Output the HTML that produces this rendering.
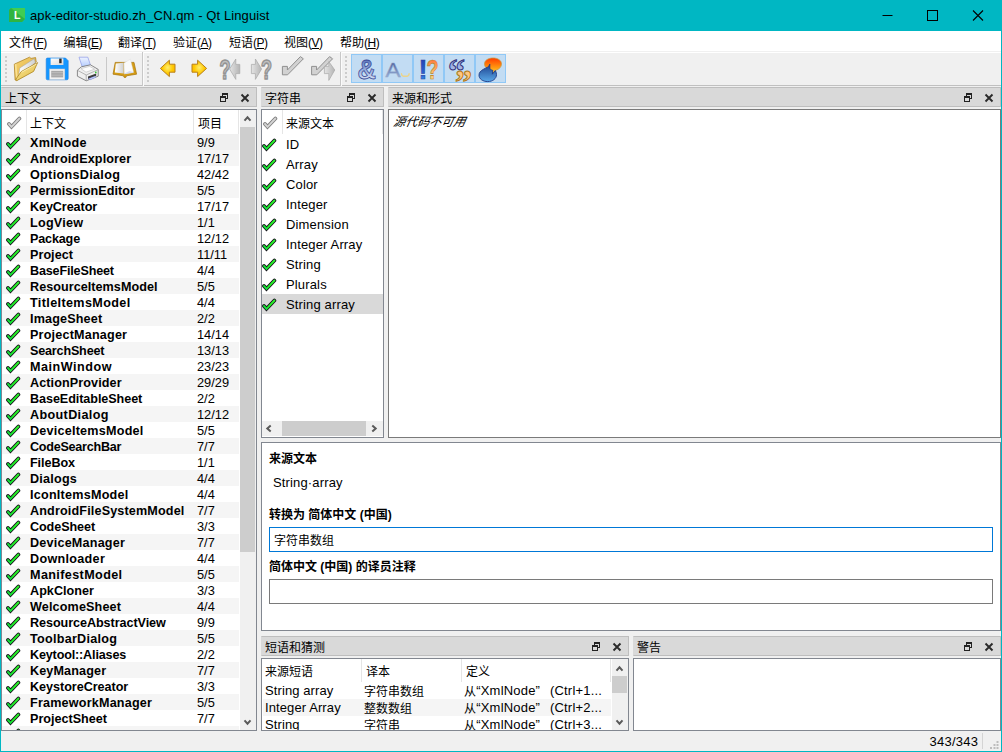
<!DOCTYPE html>
<html lang="zh-CN">
<head>
<meta charset="utf-8">
<title>apk-editor-studio.zh_CN.qm - Qt Linguist</title>
<style>
*{box-sizing:border-box;margin:0;padding:0}
html,body{width:1002px;height:752px;overflow:hidden;background:#f0f0f0}
body{font-family:"Liberation Sans","Noto Sans CJK SC",sans-serif;font-size:12px;color:#000;position:relative}
.abs{position:absolute}
svg{display:block}
#win{position:absolute;left:0;top:0;width:1002px;height:752px;background:#f0f0f0;border:1px solid #00b7c3;border-top:0}
#title{position:absolute;left:0;top:0;width:1002px;height:31px;background:#00b7c3}
#title .txt{position:absolute;left:30px;top:8px;font-size:13px;line-height:16px;white-space:nowrap;letter-spacing:.1px}
#menu{position:absolute;left:1px;top:31px;width:1000px;height:20px;background:#fff}
#menu span{position:absolute;top:4px;line-height:16px;white-space:nowrap}
#menu em{font-style:normal;letter-spacing:-.5px}
#tb{position:absolute;left:1px;top:52px;width:1000px;height:34px;background:#f0f0f0;border-top:1px solid #fff;border-bottom:1px solid #c0c0c0}
.dt{position:absolute;height:20px;background:#d9d9d9;border:1px solid #bebebe;border-left-color:#d9d9d9;line-height:22px;padding-left:3px;white-space:nowrap;overflow:hidden}
.dt .ic{position:absolute}
.view{position:absolute;background:#fff;border:1px solid #828790;overflow:hidden}
.row{position:absolute;left:0;height:16px;line-height:16px;white-space:nowrap}
.row.alt{background:#f5f5f5}
.row.sel{background:#f0f0f0}
.row b{position:absolute;left:28px;top:1px;font-weight:bold;font-size:12.6px}
.row i{position:absolute;left:195px;top:1px;font-style:normal;font-size:12.8px}
.row svg{position:absolute;left:4px;top:0}
.sb{position:absolute;background:#f0f0f0}
.th{position:absolute;background:#cdcdcd}
.hd{position:absolute;background:#fff;white-space:nowrap}
.vl{position:absolute;width:1px;background:#e5e5e5}
.mrow{position:absolute;left:0;width:121px;height:20px;line-height:20px;white-space:nowrap}
.mrow span{position:absolute;left:24px;top:1px;font-size:13px;letter-spacing:.15px}
.mrow svg{position:absolute;left:0px;top:2px}
.lbl{position:absolute;font-weight:bold;white-space:nowrap;line-height:16px}
.fld{position:absolute;background:#fff;border:1px solid #7a7a7a;line-height:27px;padding-left:4px;overflow:hidden}
.pr{position:absolute;left:1px;width:348px;height:17px;line-height:17px;white-space:nowrap}
.pr>span{position:absolute;top:0}
.l13{font-size:13px;letter-spacing:.1px}
.c12{font-size:12px;position:relative;top:1px}
</style>
</head>
<body>

<svg width="0" height="0" style="position:absolute"><defs>
<linearGradient id="gg" x1="0" y1="1" x2="1" y2="0"><stop offset="0" stop-color="#10d840"/><stop offset=".5" stop-color="#22f022"/><stop offset="1" stop-color="#2cf02c"/></linearGradient>
<symbol id="ck" viewBox="0 0 16 16"><polyline points="2,10 4.5,12.8 12.4,4.5" fill="none" stroke="#14101a" stroke-width="3.7" stroke-linecap="round" stroke-linejoin="miter"/><polyline points="2,10 4.5,12.8 12.4,4.5" fill="none" stroke="url(#gg)" stroke-width="1.9" stroke-linecap="round" stroke-linejoin="miter"/></symbol>
<symbol id="ckg" viewBox="0 0 16 16"><polyline points="2,10 4.5,12.8 12.4,4.5" fill="none" stroke="#7e7e7e" stroke-width="3.7" stroke-linecap="round" stroke-linejoin="miter"/><polyline points="2,10 4.5,12.8 12.4,4.5" fill="none" stroke="#d4d4d4" stroke-width="1.9" stroke-linecap="round" stroke-linejoin="miter"/></symbol>
<symbol id="fl" viewBox="0 0 10 10"><rect x="3.5" y="1.5" width="5" height="5" fill="none" stroke="#222" stroke-width="1"/><rect x="3" y="1" width="6" height="2" fill="#222"/><rect x="1.5" y="4.5" width="5" height="5" fill="#d9d9d9" stroke="#222" stroke-width="1"/><rect x="1" y="4" width="6" height="2" fill="#222"/></symbol>
<symbol id="cl" viewBox="0 0 10 10"><path d="M1.500 1.500l7 7M8.500 1.500l-7 7" stroke="#2a2a2a" stroke-width="1.9" fill="none"/></symbol>
<symbol id="up" viewBox="0 0 10 10"><path d="M1.5 7.7L4.5 4.3 7.5 7.7" stroke="#5a5a5a" stroke-width="2" fill="none"/></symbol>
<symbol id="dn" viewBox="0 0 10 10"><path d="M1.5 2.3L4.5 5.7 7.5 2.3" stroke="#5a5a5a" stroke-width="2" fill="none"/></symbol>
<symbol id="lf" viewBox="0 0 10 10"><path d="M7.700 1.5L4.300 4.500 7.700 7.500" stroke="#5a5a5a" stroke-width="2" fill="none"/></symbol>
<symbol id="rt" viewBox="0 0 10 10"><path d="M2.300 1.5L5.700 4.500 2.300 7.500" stroke="#5a5a5a" stroke-width="2" fill="none"/></symbol>
</defs></svg>
<div id="win"></div>
<div id="title"><svg class="abs" style="left:9px;top:8px" width="16" height="14" viewBox="0 0 16 14"><path d="M2 0h14v11l-3 3H0V2z" fill="#41cd52"/><path d="M0 2l2-2 14 11-3 3H0z" fill="#2aab3c" opacity=".75"/><text x="5" y="11" font-family="Liberation Sans,sans-serif" font-size="10.5" font-weight="bold" fill="#fff">L</text></svg><span class="txt">apk-editor-studio.zh_CN.qm - Qt Linguist</span>
<svg class="abs" style="left:864px;top:0" width="138" height="31" viewBox="0 0 138 31"><path d="M18.5 15.5h10" stroke="#000" stroke-width="1"/><rect x="63.5" y="10.5" width="10" height="10" fill="none" stroke="#000" stroke-width="1"/><path d="M109 10.5l10 10M119 10.5l-10 10" stroke="#000" stroke-width="1.1"/></svg>
</div>
<div id="menu">
<span style="left:8px">文件<em>(<u>F</u>)</em></span>
<span style="left:62.5px">编辑<em>(<u>E</u>)</em></span>
<span style="left:117px">翻译<em>(<u>T</u>)</em></span>
<span style="left:172px">验证<em>(<u>A</u>)</em></span>
<span style="left:228px">短语<em>(<u>P</u>)</em></span>
<span style="left:283px">视图<em>(<u>V</u>)</em></span>
<span style="left:339px">帮助<em>(<u>H</u>)</em></span>
</div>
<div id="tb"><svg class="abs" style="left:-1px;top:-2px" width="1002" height="36" viewBox="0 51 1002 36">
<defs>
<linearGradient id="fo1" x1="0" y1="0" x2="1" y2="1"><stop offset="0" stop-color="#f8d674"/><stop offset="1" stop-color="#dca838"/></linearGradient>
<linearGradient id="fo2" x1="0" y1="0" x2="1" y2="1"><stop offset="0" stop-color="#f9e796"/><stop offset="1" stop-color="#e2bc48"/></linearGradient>
<linearGradient id="pg" x1="0" y1="0" x2="1" y2="0"><stop offset="0" stop-color="#fff"/><stop offset="1" stop-color="#d0d0d0"/></linearGradient>
<linearGradient id="sv1" x1="0" y1="0" x2="1" y2="1"><stop offset="0" stop-color="#fff"/><stop offset="1" stop-color="#d8d8d8"/></linearGradient>
<linearGradient id="pp" x1="0" y1="0" x2="0" y2="1"><stop offset="0" stop-color="#eef3ff"/><stop offset="1" stop-color="#b4ccff"/></linearGradient>
<radialGradient id="ar" cx=".5" cy=".45" r=".6"><stop offset="0" stop-color="#ffee70"/><stop offset=".6" stop-color="#ffc800"/><stop offset="1" stop-color="#ffb400"/></radialGradient>
<linearGradient id="gr" x1="0" y1="0" x2="1" y2="0"><stop offset="0" stop-color="#e4e4e4"/><stop offset="1" stop-color="#b4b4b4"/></linearGradient>
<linearGradient id="amp" x1="0" y1="0" x2="0" y2="1"><stop offset="0" stop-color="#3a55a8"/><stop offset=".55" stop-color="#9db4e0"/><stop offset="1" stop-color="#ffffff"/></linearGradient>
<linearGradient id="aa" x1="0" y1="0" x2="0" y2="1"><stop offset="0" stop-color="#3c4a8c"/><stop offset="1" stop-color="#a9c4e6"/></linearGradient>
<linearGradient id="ex" x1="0" y1="0" x2="0" y2="1"><stop offset="0" stop-color="#2438a8"/><stop offset=".7" stop-color="#2a6ad8"/><stop offset="1" stop-color="#40c8ff"/></linearGradient>
<linearGradient id="qm" x1="0" y1="0" x2="0" y2="1"><stop offset="0" stop-color="#ff5a2a"/><stop offset=".6" stop-color="#ffc070"/><stop offset="1" stop-color="#fff0a0"/></linearGradient>
<linearGradient id="q6" x1="0" y1="0" x2="0" y2="1"><stop offset="0" stop-color="#7088d0"/><stop offset="1" stop-color="#eaf2ff"/></linearGradient>
<linearGradient id="q9" x1="0" y1="0" x2="0" y2="1"><stop offset="0" stop-color="#ffb868"/><stop offset="1" stop-color="#ffe8b8"/></linearGradient>
<linearGradient id="bo" x1="0" y1="0" x2="0" y2="1"><stop offset="0" stop-color="#ff3c00"/><stop offset=".6" stop-color="#ff9a10"/><stop offset="1" stop-color="#ffe040"/></linearGradient>
<linearGradient id="bb" x1="0" y1="0" x2="0" y2="1"><stop offset="0" stop-color="#1c3f8c"/><stop offset="1" stop-color="#58a8e8"/></linearGradient>
<g id="hdl" fill="#cccccc"><rect x="0" y="56" width="2" height="2"/><rect x="0" y="60" width="2" height="2"/><rect x="0" y="64" width="2" height="2"/><rect x="0" y="68" width="2" height="2"/><rect x="0" y="72" width="2" height="2"/><rect x="0" y="76" width="2" height="2"/><rect x="0" y="80" width="2" height="2"/></g>
</defs>
<use href="#hdl" x="5"/><use href="#hdl" x="147"/><use href="#hdl" x="345"/>
<path d="M142.5 52v34M340.5 52v34" stroke="#c8c8c8" stroke-width="1"/>
<path d="M143.5 52v34M341.5 52v34" stroke="#fbfbfb" stroke-width="1"/>
<path d="M106.5 57v24" stroke="#c9c9c9" stroke-width="1"/>
<!-- folder -->
<path d="M14.300 64.200L29.500 57.200l1.500 1.200 4.600-.8.600 4.400-19.500 18.600-1.600-.6z" fill="url(#fo1)" stroke="#b08424" stroke-width=".8" stroke-linejoin="round"/>
<path d="M14.700 64.600l1.700-.8 1.300 15-1.500.9z" fill="#fbe7a0" opacity=".8"/>
<path d="M19.800 68L34.200 58.800l1.200 3.600L18.300 77.800z" fill="url(#pg)" stroke="#a0a0a0" stroke-width=".5"/>
<path d="M21.200 71.600L37.600 62.600 33.600 71.400 17.200 80.400 15.600 79.600z" fill="url(#fo2)" stroke="#ac8420" stroke-width=".8" stroke-linejoin="round"/>
<path d="M21.600 72.200L36.400 64" stroke="#fff6c8" stroke-width=".7" fill="none"/>
<!-- save -->
<path d="M47.5 58h18l2.7 2.7v17.8a1.3 1.3 0 0 1-1.3 1.3h-19.4a1.3 1.3 0 0 1-1.3-1.3v-19.2a1.3 1.3 0 0 1 1.3-1.3z" fill="#1496ff" stroke="#1e7fe0" stroke-width=".6"/>
<rect x="50.6" y="58.4" width="12.8" height="6.6" fill="url(#sv1)"/>
<rect x="59.2" y="58.6" width="2.4" height="4.6" fill="#2a2a2a"/>
<rect x="49.6" y="69" width="15.2" height="10.6" fill="#f2f2f2" stroke="#c8c8c8" stroke-width=".5"/>
<rect x="51.2" y="70.8" width="12" height="6.6" fill="#a8a8a8"/>
<path d="M51.2 72.6h12M51.2 75.2h12" stroke="#c4c4c4" stroke-width=".7"/>
<!-- printer -->
<path d="M79 57.2h8.8l2.8 8.2-8.4 1.4z" fill="url(#pp)" stroke="#8c9ae8" stroke-width=".7"/>
<path d="M77.4 70.2l4-3.4 9-2 7.8 4.6v6.8l-12 4.6-8.8-4.6z" fill="#efefef" stroke="#6e6e6e" stroke-width=".8" stroke-linejoin="round"/>
<path d="M77.6 70.4l8.6 4.6 12-5.4" fill="none" stroke="#9a9a9a" stroke-width=".7"/>
<path d="M86.2 75v5.6" stroke="#9a9a9a" stroke-width=".7"/>
<path d="M81 68.6l8.6-2.2 5 2.8-8.6 3z" fill="#fdfdfd" stroke="#b0b0b0" stroke-width=".5"/>
<path d="M88 76.600l8.200-3.200v2.400l-8.200 3.400z" fill="#3c3c3c"/>
<path d="M88.400 78.800l6-2.400 1.600.8-6 2.600z" fill="#c8d4ff" stroke="#6a78d8" stroke-width=".4"/>
<rect x="95" y="71.600" width="1.600" height="1.600" fill="#34c834"/>
<!-- book -->
<path d="M115.200 62.400L113 74.200l10.400 1.600.8 1.600h1.600l.8-1.600 10-1.600L134 62.400z" fill="#d49c16" stroke="#a87408" stroke-width=".7" stroke-linejoin="round"/>
<path d="M115.800 63.400l7.800-.6v10.600l-8.800-.8z" fill="url(#pg)"/>
<path d="M124 63l6.400-3.800 3.200 13-9.400 1.600z" fill="#fafafa" stroke="#d8d8d8" stroke-width=".4"/>
<path d="M124.200 73.800l5.200-2.800 4.200 1.200-.2.600-9 1.400z" fill="#d4dcf0"/>
<!-- arrows -->
<path d="M160.400 68.400l9-8.200v4h5.600v8h-5.600v4.400z" fill="url(#ar)" stroke="#b8801a" stroke-width="1" stroke-linejoin="round"/>
<path d="M206.600 68.400l-9-8.200v4h-5.600v8h5.600v4.400z" fill="url(#ar)" stroke="#b8801a" stroke-width="1" stroke-linejoin="round"/>
<!-- ?< -->
<text x="219.500" y="79" font-family="Liberation Sans,sans-serif" font-weight="bold" font-size="27.500" fill="#c0c0c0" stroke="#949494" stroke-width="1.700" stroke-linejoin="round" textLength="11" lengthAdjust="spacingAndGlyphs">?</text>
<path d="M229.600 69l6.200-10v5.400h4v9.200h-4v5.800z" fill="url(#gr)" stroke="#a8a8a8" stroke-width=".7" stroke-linejoin="round"/>
<!-- >? -->
<path d="M261.600 69l-6.200-10v5.400h-4v9.200h4v5.800z" fill="url(#gr)" stroke="#a8a8a8" stroke-width=".7" stroke-linejoin="round"/>
<text x="261" y="79" font-family="Liberation Sans,sans-serif" font-weight="bold" font-size="27.500" fill="#c0c0c0" stroke="#949494" stroke-width="1.700" stroke-linejoin="round" textLength="11" lengthAdjust="spacingAndGlyphs">?</text>
<!-- check -->
<path d="M282.400 66.400h5v3.600L300.400 56.600l3 2.200-15.800 16h-5.200z" fill="#d2d2d2" stroke="#909090" stroke-width="1" stroke-linejoin="round"/>
<!-- check + arrow -->
<path d="M311.600 66.400h5v3.600L329.600 56.600l3 2.200-15.800 16h-5.200z" fill="#d2d2d2" stroke="#909090" stroke-width="1" stroke-linejoin="round"/>
<path d="M334.800 70l-6-8.400v4.800h-4.400v7.200h4.400v6.800z" fill="url(#gr)" stroke="#a8a8a8" stroke-width=".7" stroke-linejoin="round"/>
<!-- checked buttons -->
<g fill="#c2dcf3" stroke="#90c8f6" stroke-width="1">
<rect x="351.500" y="54.500" width="30" height="28"/><rect x="382.500" y="54.500" width="30" height="28"/><rect x="413.500" y="54.500" width="30" height="28"/><rect x="444.500" y="54.500" width="30" height="28"/><rect x="475.500" y="54.500" width="30" height="28"/>
</g>
<text x="357.500" y="79" font-family="Liberation Sans,sans-serif" font-weight="bold" font-size="27.500" fill="url(#amp)" stroke="#3c4a98" stroke-width=".8" textLength="18.500" lengthAdjust="spacingAndGlyphs">&amp;</text>
<text x="385.500" y="77" font-family="Liberation Sans,sans-serif" font-size="21" fill="url(#aa)" stroke="#8ea4c8" stroke-width=".4" textLength="15" lengthAdjust="spacingAndGlyphs">A</text>
<path d="M401.500 73.800q.2 2.400 2 2.400h3.600q1.800 0 2-2.400" fill="none" stroke="#ecd48a" stroke-width="1.400" stroke-linecap="round"/>
<text x="418.500" y="79" font-family="Liberation Sans,sans-serif" font-weight="bold" font-size="27.500" fill="url(#ex)" stroke="#2a3a98" stroke-width=".5" textLength="9" lengthAdjust="spacingAndGlyphs">!</text>
<text x="426.500" y="79" font-family="Liberation Sans,sans-serif" font-weight="bold" font-size="27.500" fill="url(#qm)" stroke="#b8801a" stroke-width=".7" textLength="12" lengthAdjust="spacingAndGlyphs">?</text>
<text x="448" y="82" font-family="Liberation Serif,serif" font-weight="bold" font-size="34" fill="url(#q6)" stroke="#30307c" stroke-width="1" textLength="17" lengthAdjust="spacingAndGlyphs">“</text>
<text x="455" y="92.500" font-family="Liberation Serif,serif" font-weight="bold" font-size="34" fill="url(#q9)" stroke="#b07818" stroke-width="1" textLength="17" lengthAdjust="spacingAndGlyphs">”</text>
<!-- bubbles -->
<path d="M493 58C498 58 501.500 60.500 501.500 64C501.500 67 499.200 69.200 496 70.200L492.400 74.200 492.800 70.400C488 70 484.500 67.500 484.500 64 484.500 60.500 488 58 493 58z" fill="url(#bo)" stroke="#c89a48" stroke-width=".8"/>
<path d="M489.800 64.200C489.200 67 486.400 67.600 483.600 69.200 480.600 70.800 479 72.600 479 75.200c0 3.700 3.800 6.400 8.800 6.400s8.700-3 8.700-7c0-1.500-.4-2.900-1.200-4.100l-3 3.700.5-3.800c-1.600-.2-2.600-1-3-2.200z" fill="url(#bb)" stroke="#1c3a88" stroke-width=".9" stroke-linejoin="round"/>
</svg>
</div>

<div class="dt" style="left:1px;top:87px;width:256px">上下文<svg class="ic" style="left:217px;top:4px" width="10" height="10"><use href="#fl"/></svg><svg class="ic" style="left:238px;top:5px" width="10" height="10"><use href="#cl"/></svg></div>
<div class="dt" style="left:261px;top:87px;width:123px">字符串<svg class="ic" style="left:84px;top:4px" width="10" height="10"><use href="#fl"/></svg><svg class="ic" style="left:105px;top:5px" width="10" height="10"><use href="#cl"/></svg></div>
<div class="dt" style="left:388px;top:87px;width:613px">来源和形式<svg class="ic" style="left:574px;top:4px" width="10" height="10"><use href="#fl"/></svg><svg class="ic" style="left:595px;top:5px" width="10" height="10"><use href="#cl"/></svg></div>
<div class="view" id="ctx" style="left:1px;top:109px;width:256px;height:622px">
<div class="hd" style="left:0;top:0;width:238px;height:24px;line-height:28px;overflow:hidden"><svg class="abs" style="left:5px;top:4px" width="16" height="16"><use href="#ckg"/></svg><span class="abs" style="left:28px">上下文</span><span class="abs" style="left:196px">项目</span><div class="vl" style="left:191px;top:0;height:24px"></div><div class="vl" style="left:24px;top:0;height:24px"></div><div class="vl" style="left:236px;top:0;height:24px"></div></div>
<div class="row sel" style="top:24px;width:237px"><svg width="16" height="16"><use href="#ck"/></svg><b style="letter-spacing:0.301px">XmlNode</b><i>9/9</i></div>
<div class="row alt" style="top:40px;width:237px"><svg width="16" height="16"><use href="#ck"/></svg><b style="letter-spacing:0.128px">AndroidExplorer</b><i>17/17</i></div>
<div class="row" style="top:56px;width:237px"><svg width="16" height="16"><use href="#ck"/></svg><b style="letter-spacing:0.318px">OptionsDialog</b><i>42/42</i></div>
<div class="row alt" style="top:72px;width:237px"><svg width="16" height="16"><use href="#ck"/></svg><b style="letter-spacing:0.045px">PermissionEditor</b><i>5/5</i></div>
<div class="row" style="top:88px;width:237px"><svg width="16" height="16"><use href="#ck"/></svg><b style="letter-spacing:-0.081px">KeyCreator</b><i>17/17</i></div>
<div class="row alt" style="top:104px;width:237px"><svg width="16" height="16"><use href="#ck"/></svg><b style="letter-spacing:0.248px">LogView</b><i>1/1</i></div>
<div class="row" style="top:120px;width:237px"><svg width="16" height="16"><use href="#ck"/></svg><b style="letter-spacing:-0.161px">Package</b><i>12/12</i></div>
<div class="row alt" style="top:136px;width:237px"><svg width="16" height="16"><use href="#ck"/></svg><b style="letter-spacing:0.042px">Project</b><i>11/11</i></div>
<div class="row" style="top:152px;width:237px"><svg width="16" height="16"><use href="#ck"/></svg><b style="letter-spacing:-0.17px">BaseFileSheet</b><i>4/4</i></div>
<div class="row alt" style="top:168px;width:237px"><svg width="16" height="16"><use href="#ck"/></svg><b style="letter-spacing:0.045px">ResourceItemsModel</b><i>5/5</i></div>
<div class="row" style="top:184px;width:237px"><svg width="16" height="16"><use href="#ck"/></svg><b style="letter-spacing:0.376px">TitleItemsModel</b><i>4/4</i></div>
<div class="row alt" style="top:200px;width:237px"><svg width="16" height="16"><use href="#ck"/></svg><b style="letter-spacing:0.16px">ImageSheet</b><i>2/2</i></div>
<div class="row" style="top:216px;width:237px"><svg width="16" height="16"><use href="#ck"/></svg><b style="letter-spacing:0.194px">ProjectManager</b><i>14/14</i></div>
<div class="row alt" style="top:232px;width:237px"><svg width="16" height="16"><use href="#ck"/></svg><b style="letter-spacing:-0.183px">SearchSheet</b><i>13/13</i></div>
<div class="row" style="top:248px;width:237px"><svg width="16" height="16"><use href="#ck"/></svg><b style="letter-spacing:0.526px">MainWindow</b><i>23/23</i></div>
<div class="row alt" style="top:264px;width:237px"><svg width="16" height="16"><use href="#ck"/></svg><b style="letter-spacing:0.101px">ActionProvider</b><i>29/29</i></div>
<div class="row" style="top:280px;width:237px"><svg width="16" height="16"><use href="#ck"/></svg><b style="letter-spacing:-0.07px">BaseEditableSheet</b><i>2/2</i></div>
<div class="row alt" style="top:296px;width:237px"><svg width="16" height="16"><use href="#ck"/></svg><b style="letter-spacing:0.358px">AboutDialog</b><i>12/12</i></div>
<div class="row" style="top:312px;width:237px"><svg width="16" height="16"><use href="#ck"/></svg><b style="letter-spacing:0.226px">DeviceItemsModel</b><i>5/5</i></div>
<div class="row alt" style="top:328px;width:237px"><svg width="16" height="16"><use href="#ck"/></svg><b style="letter-spacing:-0.254px">CodeSearchBar</b><i>7/7</i></div>
<div class="row" style="top:344px;width:237px"><svg width="16" height="16"><use href="#ck"/></svg><b style="letter-spacing:-0.071px">FileBox</b><i>1/1</i></div>
<div class="row alt" style="top:360px;width:237px"><svg width="16" height="16"><use href="#ck"/></svg><b style="letter-spacing:0.229px">Dialogs</b><i>4/4</i></div>
<div class="row" style="top:376px;width:237px"><svg width="16" height="16"><use href="#ck"/></svg><b style="letter-spacing:0.238px">IconItemsModel</b><i>4/4</i></div>
<div class="row alt" style="top:392px;width:237px"><svg width="16" height="16"><use href="#ck"/></svg><b style="letter-spacing:0.152px">AndroidFileSystemModel</b><i>7/7</i></div>
<div class="row" style="top:408px;width:237px"><svg width="16" height="16"><use href="#ck"/></svg><b style="letter-spacing:-0.087px">CodeSheet</b><i>3/3</i></div>
<div class="row alt" style="top:424px;width:237px"><svg width="16" height="16"><use href="#ck"/></svg><b style="letter-spacing:0.207px">DeviceManager</b><i>7/7</i></div>
<div class="row" style="top:440px;width:237px"><svg width="16" height="16"><use href="#ck"/></svg><b style="letter-spacing:0.302px">Downloader</b><i>4/4</i></div>
<div class="row alt" style="top:456px;width:237px"><svg width="16" height="16"><use href="#ck"/></svg><b style="letter-spacing:0.387px">ManifestModel</b><i>5/5</i></div>
<div class="row" style="top:472px;width:237px"><svg width="16" height="16"><use href="#ck"/></svg><b style="letter-spacing:0.035px">ApkCloner</b><i>3/3</i></div>
<div class="row alt" style="top:488px;width:237px"><svg width="16" height="16"><use href="#ck"/></svg><b style="letter-spacing:0.137px">WelcomeSheet</b><i>4/4</i></div>
<div class="row" style="top:504px;width:237px"><svg width="16" height="16"><use href="#ck"/></svg><b style="letter-spacing:-0.058px">ResourceAbstractView</b><i>9/9</i></div>
<div class="row alt" style="top:520px;width:237px"><svg width="16" height="16"><use href="#ck"/></svg><b style="letter-spacing:0.259px">ToolbarDialog</b><i>5/5</i></div>
<div class="row" style="top:536px;width:237px"><svg width="16" height="16"><use href="#ck"/></svg><b style="letter-spacing:-0.162px">Keytool::Aliases</b><i>2/2</i></div>
<div class="row alt" style="top:552px;width:237px"><svg width="16" height="16"><use href="#ck"/></svg><b style="letter-spacing:0.129px">KeyManager</b><i>7/7</i></div>
<div class="row" style="top:568px;width:237px"><svg width="16" height="16"><use href="#ck"/></svg><b style="letter-spacing:-0.034px">KeystoreCreator</b><i>3/3</i></div>
<div class="row alt" style="top:584px;width:237px"><svg width="16" height="16"><use href="#ck"/></svg><b style="letter-spacing:0.195px">FrameworkManager</b><i>5/5</i></div>
<div class="row" style="top:600px;width:237px"><svg width="16" height="16"><use href="#ck"/></svg><b style="letter-spacing:-0.008px">ProjectSheet</b><i>7/7</i></div>
<div class="row alt" style="top:616px;width:237px"><svg width="16" height="16"><use href="#ck"/></svg></div>
<div class="sb" style="left:238px;top:0;width:16px;height:620px"><svg class="abs" style="left:3px;top:3px" width="10" height="10"><use href="#up"/></svg><div class="th" style="left:0;top:17px;width:15px;height:425px"></div><svg class="abs" style="left:3px;top:607.5px" width="10" height="10"><use href="#dn"/></svg></div>
</div>
<div class="view" id="msgs" style="left:261px;top:109px;width:123px;height:329px">
<div class="hd" style="left:0;top:0;width:121px;height:24px;line-height:28px;overflow:hidden"><svg class="abs" style="left:1px;top:4px" width="16" height="16"><use href="#ckg"/></svg><span class="abs" style="left:24px">来源文本</span><div class="vl" style="left:20px;top:0;height:24px"></div><div class="vl" style="left:120px;top:0;height:24px"></div></div>
<div class="mrow" style="top:24px"><svg width="16" height="16"><use href="#ck"/></svg><span>ID</span></div>
<div class="mrow" style="top:44px"><svg width="16" height="16"><use href="#ck"/></svg><span>Array</span></div>
<div class="mrow" style="top:64px"><svg width="16" height="16"><use href="#ck"/></svg><span>Color</span></div>
<div class="mrow" style="top:84px"><svg width="16" height="16"><use href="#ck"/></svg><span>Integer</span></div>
<div class="mrow" style="top:104px"><svg width="16" height="16"><use href="#ck"/></svg><span>Dimension</span></div>
<div class="mrow" style="top:124px"><svg width="16" height="16"><use href="#ck"/></svg><span>Integer Array</span></div>
<div class="mrow" style="top:144px"><svg width="16" height="16"><use href="#ck"/></svg><span>String</span></div>
<div class="mrow" style="top:164px"><svg width="16" height="16"><use href="#ck"/></svg><span>Plurals</span></div>
<div class="mrow" style="top:184px;background:#d9d9d9"><svg width="16" height="16"><use href="#ck"/></svg><span>String array</span></div>
<div class="sb" style="left:0px;top:311px;width:121px;height:15px"><svg class="abs" style="left:1px;top:3px" width="10" height="10"><use href="#lf"/></svg><div class="th" style="left:20px;top:0;width:84px;height:15px"></div><svg class="abs" style="left:108px;top:3px" width="10" height="10"><use href="#rt"/></svg></div>
</div>
<div class="view" id="src" style="left:388px;top:109px;width:613px;height:329px;border-color:#7a7a7a"><span class="abs" style="left:3px;top:4px;line-height:16px;font-style:italic;white-space:nowrap;transform:skewX(-12deg);transform-origin:0 100%">源代码不可用</span></div>
<div class="view" id="editor" style="left:261px;top:442px;width:740px;height:189px">
<div class="lbl" style="left:7px;top:8px">来源文本</div>
<div class="abs" style="left:11px;top:32px;line-height:16px;white-space:nowrap;font-size:13px;letter-spacing:.15px">String·array</div>
<div class="lbl" style="left:7px;top:64px">转换为 简体中文 (中国)</div>
<div class="fld" style="left:7px;top:84px;width:724px;height:25px;border-color:#0078d7">字符串数组</div>
<div class="lbl" style="left:7px;top:116px">简体中文 (中国) 的译员注释</div>
<div class="fld" style="left:7px;top:136px;width:724px;height:25px"></div>
</div>
<div class="dt" style="left:261px;top:636px;width:368px">短语和猜测<svg class="ic" style="left:329px;top:4px" width="10" height="10"><use href="#fl"/></svg><svg class="ic" style="left:350px;top:5px" width="10" height="10"><use href="#cl"/></svg></div>
<div class="dt" style="left:633px;top:636px;width:368px">警告<svg class="ic" style="left:329px;top:4px" width="10" height="10"><use href="#fl"/></svg><svg class="ic" style="left:350px;top:5px" width="10" height="10"><use href="#cl"/></svg></div>
<div class="view" id="phr" style="left:261px;top:658px;width:368px;height:73px">
<div class="hd" style="left:0;top:0;width:350px;height:23px;line-height:27px;overflow:hidden"><span class="abs" style="left:3px">来源短语</span><span class="abs" style="left:104px">译本</span><span class="abs" style="left:204px">定义</span><div class="vl" style="left:99px;top:0;height:23px"></div><div class="vl" style="left:199px;top:0;height:23px"></div><div class="vl" style="left:348px;top:0;height:23px"></div></div>
<div class="pr" style="top:23px"><span class="l13" style="left:2px;top:0px">String array</span><span style="left:101px;top:2px">字符串数组</span><span class="l13" style="left:201px;top:0px;word-spacing:6px;letter-spacing:.2px"><span class="c12">从</span>“XmlNode” (Ctrl+1...</span></div>
<div class="pr" style="top:40px;background:#f5f5f5"><span class="l13" style="left:2px;top:0px">Integer Array</span><span style="left:101px;top:2px">整数数组</span><span class="l13" style="left:201px;top:0px;word-spacing:6px;letter-spacing:.2px"><span class="c12">从</span>“XmlNode” (Ctrl+2...</span></div>
<div class="pr" style="top:57px"><span class="l13" style="left:2px;top:0px">String</span><span style="left:101px;top:2px">字符串</span><span class="l13" style="left:201px;top:0px;word-spacing:6px;letter-spacing:.2px"><span class="c12">从</span>“XmlNode” (Ctrl+3...</span></div>
<div class="sb" style="left:350px;top:0;width:16px;height:71px"><svg class="abs" style="left:3px;top:4px" width="10" height="10"><use href="#up"/></svg><div class="th" style="left:0;top:17px;width:15px;height:17px"></div><svg class="abs" style="left:3px;top:59px" width="10" height="10"><use href="#dn"/></svg></div>
</div>
<div class="view" id="warn" style="left:633px;top:658px;width:368px;height:73px"></div>
<div class="abs" id="status" style="left:1px;top:732px;width:1000px;height:19px"><span class="abs" style="left:928.5px;top:2px;line-height:16px;font-size:13px;letter-spacing:.25px">343/343</span><div class="abs" style="left:981px;top:1px;width:1px;height:16px;background:#d4d4d4"></div>
<svg class="abs" style="left:988px;top:8px" width="10" height="10" viewBox="0 0 10 10" fill="#bdbdbd"><rect x="7.500" y="1" width="2" height="2"/><rect x="4.500" y="4" width="2" height="2"/><rect x="7.500" y="4" width="2" height="2"/><rect x="1" y="7" width="2" height="2"/><rect x="4.500" y="7" width="2" height="2"/><rect x="7.500" y="7" width="2" height="2"/></svg></div>
</body>
</html>
